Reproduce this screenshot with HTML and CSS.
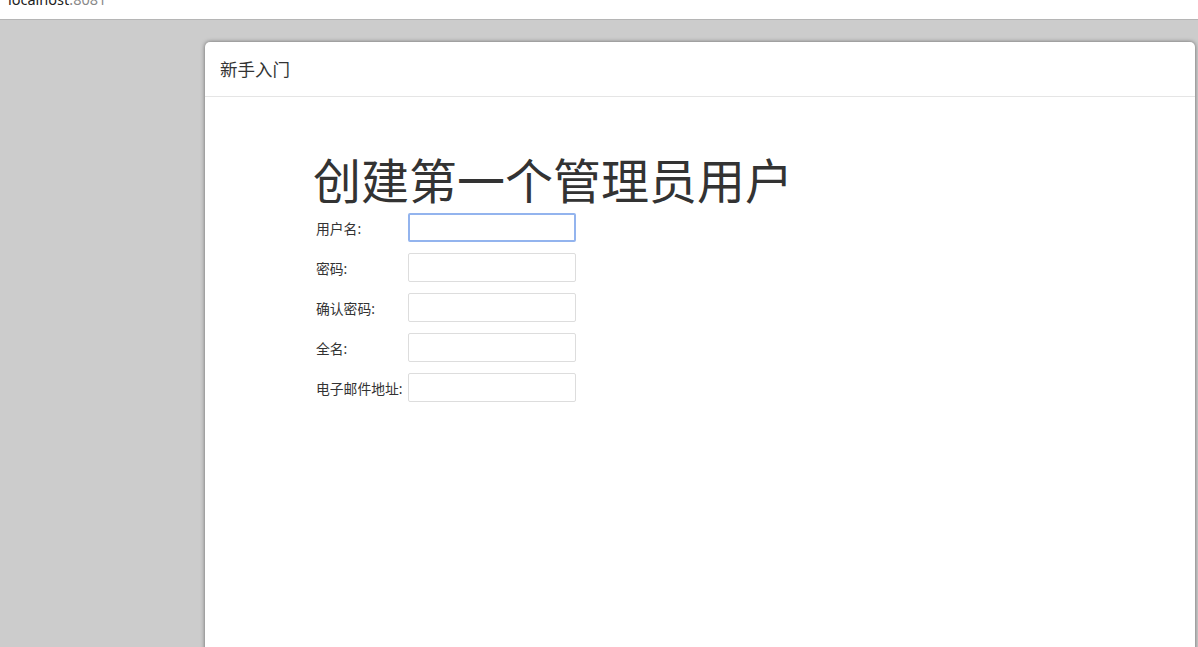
FILE: index.html
```html
<!DOCTYPE html>
<html lang="zh-CN">
<head>
    <meta charset="UTF-8">
    <meta name="viewport" content="width=device-width, initial-scale=1.0">
    <title>新手入门</title>
    <link rel="stylesheet" href="styles.css">
</head>
<body>
    <div class="address-bar">
        <span class="host">localhost</span><span class="port">:8081</span>
    </div>

    <div class="backdrop">
        <div class="modal">
            <div class="modal-header">新手入门</div>
            <div class="modal-body">
                <h1>创建第一个管理员用户</h1>
                <form class="setup-form">
                    <div class="form-row">
                        <label for="username">用户名:</label>
                        <input type="text" id="username" class="focused">
                    </div>
                    <div class="form-row">
                        <label for="password">密码:</label>
                        <input type="password" id="password">
                    </div>
                    <div class="form-row">
                        <label for="password2">确认密码:</label>
                        <input type="password" id="password2">
                    </div>
                    <div class="form-row">
                        <label for="fullname">全名:</label>
                        <input type="text" id="fullname">
                    </div>
                    <div class="form-row">
                        <label for="email">电子邮件地址:</label>
                        <input type="text" id="email">
                    </div>
                </form>
            </div>
        </div>
    </div>
</body>
</html>
```

FILE: styles.css
```css
* {
    box-sizing: border-box;
}

body {
    margin: 0;
    height: 647px;
    overflow: hidden;
    font-family: 'Noto Sans', 'Noto Sans CJK SC', sans-serif;
    color: #333;
    background-color: #ccc;
}

.address-bar {
    height: 20px;
    background-color: #fff;
    border-bottom: 1px solid #b5b5b5;
    overflow: hidden;
    padding-left: 8px;
    font-size: 14.5px;
    line-height: 16px;
}

.address-bar span {
    position: relative;
    top: -9px;
}

.host {
    color: #222;
}

.port {
    color: #888;
}

.backdrop {
    padding: 22px 3px 0 205px;
}

.modal {
    background-color: #fff;
    border-radius: 5px 5px 0 0;
    box-shadow: 0 0 4px rgba(0, 0, 0, 0.5);
    height: 620px;
}

.modal-header {
    height: 55px;
    padding: 0 15px;
    border-bottom: 1px solid #e5e5e5;
    font-size: 17.5px;
    line-height: 54px;
    color: #333;
}

.modal-body {
    padding: 54px 0 0 108px;
}

h1 {
    margin: 0;
    font-size: 48px;
    font-weight: 400;
    line-height: 60px;
    color: #333;
}

.setup-form {
    padding-left: 3px;
    margin-top: 2px;
}

.form-row {
    display: flex;
    align-items: center;
    height: 29px;
    margin-bottom: 11px;
}

label {
    width: 92px;
    font-size: 13.8px;
    white-space: nowrap;
    color: #333;
}

input {
    width: 168px;
    height: 29px;
    border: 1px solid #ddd;
    border-radius: 2px;
    padding: 4px 6px;
    font-size: 12px;
    outline: none;
}

input.focused {
    border: 2px solid #93b4ee;
}
```
